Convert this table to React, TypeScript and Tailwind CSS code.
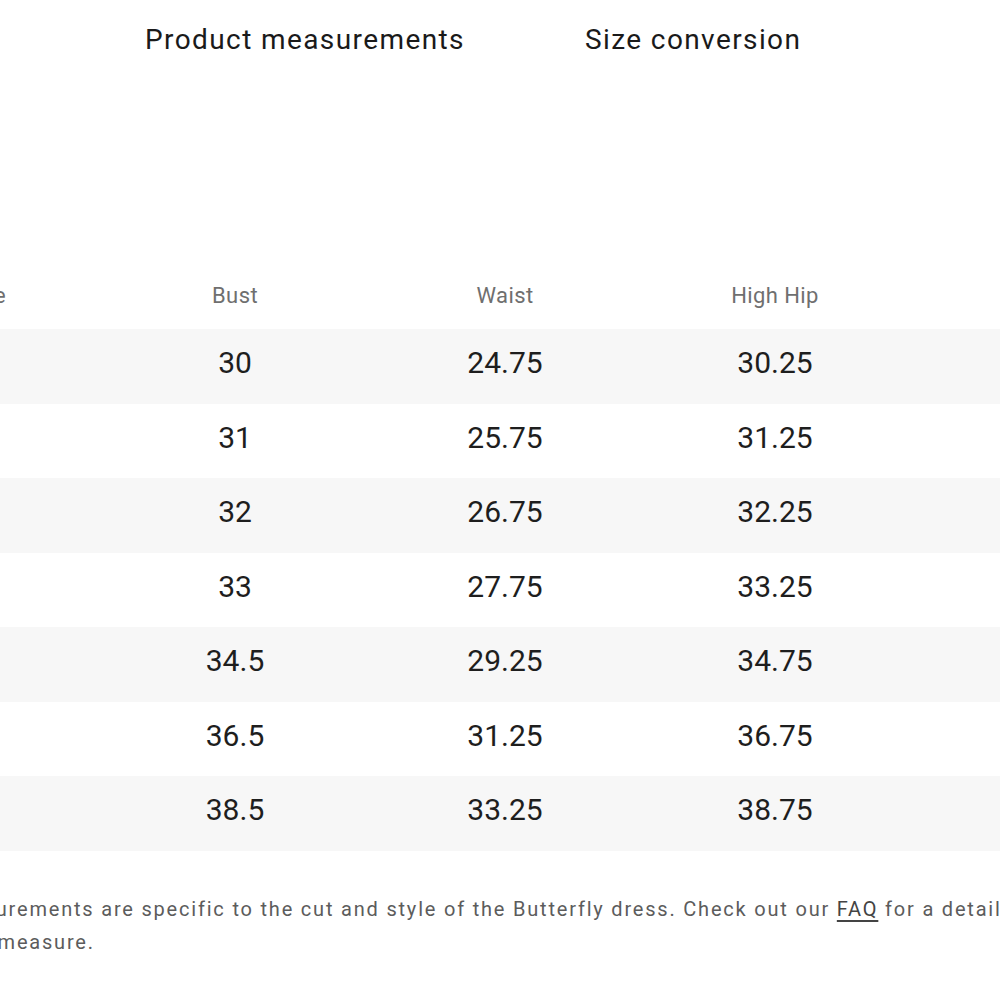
const rows = [
  { size: "00", bust: "30", waist: "24.75", highHip: "30.25", hip: "34" },
  { size: "0", bust: "31", waist: "25.75", highHip: "31.25", hip: "35" },
  { size: "2", bust: "32", waist: "26.75", highHip: "32.25", hip: "36" },
  { size: "4", bust: "33", waist: "27.75", highHip: "33.25", hip: "37" },
  { size: "6", bust: "34.5", waist: "29.25", highHip: "34.75", hip: "38.5" },
  { size: "8", bust: "36.5", waist: "31.25", highHip: "36.75", hip: "40.5" },
  { size: "10", bust: "38.5", waist: "33.25", highHip: "38.75", hip: "42.5" },
];

export default function App() {
  return (
    <div
      className="h-[1000px] w-[1000px] overflow-hidden bg-white"
      style={{ fontFamily: "Roboto, 'Liberation Sans', sans-serif" }}
    >
      {/* tabs */}
      <div className="flex items-center pt-[20px] text-[28px] leading-[40px] tracking-[1.4px] text-[#1a1a1a]">
        <span className="ml-[145px]">Product measurements</span>
        <span className="ml-[120px]">Size conversion</span>
      </div>

      {/* table */}
      <div className="ml-[-170px] mt-[198px] w-[1350px]">
        <div className="grid h-[71px] grid-cols-[270px_270px_270px_270px_270px] items-center pt-[4px] text-[22px] tracking-[0.4px] text-[#6f6f6f]">
          <div className="pr-[94px] text-right">Size</div>
          <div className="text-center">Bust</div>
          <div className="text-center">Waist</div>
          <div className="text-center">High Hip</div>
          <div className="text-center">Hip</div>
        </div>
        {rows.map((r, i) => (
          <div
            key={r.size}
            className={`grid h-[74.5px] grid-cols-[270px_270px_270px_270px_270px] items-center pb-[7px] text-[30px] text-[#1e1e1e] ${
              i % 2 === 0 ? "bg-[#f7f7f7]" : "bg-white"
            }`}
          >
            <div className="text-center">{r.size}</div>
            <div className="text-center">{r.bust}</div>
            <div className="text-center">{r.waist}</div>
            <div className="text-center">{r.highHip}</div>
            <div className="text-center">{r.hip}</div>
          </div>
        ))}
      </div>

      {/* note */}
      <p className="ml-[-131px] mt-[42px] w-[1300px] text-[20px] leading-[33px] tracking-[1.8px] text-[#5c5c5c]">
        These measurements are specific to the cut and style of the Butterfly dress. Check out our{" "}
        <a className="text-[#444] underline underline-offset-[4px]">FAQ</a> for a detailed guide
        <span className="block pl-[18px]">on how to measure.</span>
      </p>
    </div>
  );
}
